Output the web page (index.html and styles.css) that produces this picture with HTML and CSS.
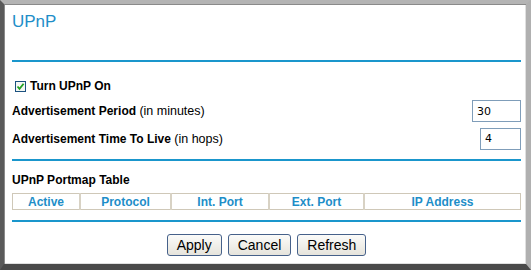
FILE: index.html
```html
<!DOCTYPE html>
<html lang="en">
<head>
    <meta charset="UTF-8">
    <meta name="viewport" content="width=device-width, initial-scale=1.0">
    <title>UPnP</title>
    <link rel="stylesheet" href="styles.css">
</head>
<body>
    <div class="frame">
        <div class="page">
            <h1 class="title">UPnP</h1>
            <div class="rule rule-top"></div>

            <div class="row row-check">
                <span class="check">
                    <svg width="11" height="11" viewBox="0 0 11 11">
                        <rect x="0.5" y="0.5" width="10" height="10" fill="#f4f8f4" stroke="#1c5180"/>
                        <path d="M2.5 5.5 L4.5 7.8 L8.6 2.8" fill="none" stroke="#21a121" stroke-width="1.8"/>
                    </svg>
                </span>
                <b>Turn UPnP On</b>
            </div>
            <div class="row row-field row-period">
                <span><b>Advertisement Period</b> <span class="note">(in minutes)</span></span>
                <input class="field field-wide" type="text" value="30">
            </div>
            <div class="row row-field row-ttl">
                <span><b>Advertisement Time To Live</b> <span class="note">(in hops)</span></span>
                <input class="field field-narrow" type="text" value="4">
            </div>
            <div class="rule rule-mid"></div>

            <div class="table-label"><b>UPnP Portmap Table</b></div>
            <table class="portmap">
                <tr>
                    <th class="c-active">Active</th>
                    <th class="c-proto">Protocol</th>
                    <th class="c-int">Int. Port</th>
                    <th class="c-ext">Ext. Port</th>
                    <th>IP Address</th>
                </tr>
            </table>
            <div class="rule rule-bottom"></div>

            <div class="buttons">
                <button class="btn">Apply</button>
                <button class="btn">Cancel</button>
                <button class="btn">Refresh</button>
            </div>
        </div>
    </div>
</body>
</html>
```

FILE: styles.css
```css
body {
    margin: 0;
    background: #d8d8d8;
    font-family: 'Liberation Sans', Arial, sans-serif;
    font-size: 12px;
    color: #000;
}
.frame {
    width: 531px;
    height: 270px;
    box-sizing: border-box;
    background: #fff;
    border-top: 4px solid #b4b4b4;
    border-left: 4px solid #5a5a5a;
    border-right: 5px solid #b0b0b0;
    border-bottom: 6px solid #4a4a4a;
    box-shadow: inset 1px 1px 0 #8a8a8a, inset -1px -1px 0 #e0e0e0;
}
.page {
    padding: 0 5px 0 8px;
}
.title {
    margin: 0;
    padding-top: 8px;
    height: 22px;
    font-size: 17px;
    font-weight: normal;
    color: #1e8ec8;
}
.rule {
    height: 2px;
    background: #1a96cc;
}
.rule-top {
    margin-top: 26px;
}
.row {
    display: flex;
    align-items: center;
}
.row-check {
    margin-top: 15px;
    height: 18px;
    padding-left: 3px;
    gap: 4px;
}
.check svg {
    display: block;
}
.row-field {
    justify-content: space-between;
}
.row-period {
    height: 32px;
}
.row-ttl {
    height: 23px;
}
.note {
    font-size: 12.5px;
}
.field {
    box-sizing: border-box;
    height: 22px;
    border: 1px solid #7f9db9;
    font-family: 'DejaVu Sans', sans-serif;
    font-size: 11px;
    padding: 0 4px;
    outline: none;
}
.field-wide {
    width: 49px;
}
.field-narrow {
    width: 41px;
}
.rule-mid {
    margin-top: 9px;
}
.table-label {
    margin-top: 12px;
    height: 15px;
}
.portmap {
    width: 100%;
    border-collapse: collapse;
    border: 1px solid #cfc8b8;
    margin-top: 5px;
}
.portmap th {
    height: 15px;
    padding: 0;
    border-left: 2px solid #d8d2c4;
    color: #1e8ec8;
    font-size: 12px;
    text-align: center;
}
.portmap th:first-child {
    border-left: none;
}
.c-active { width: 66px; }
.c-proto { width: 89px; }
.c-int { width: 96px; }
.c-ext { width: 93px; }
.rule-bottom {
    margin-top: 10px;
}
.buttons {
    display: flex;
    justify-content: center;
    gap: 6px;
    margin-top: 12px;
}
.btn {
    height: 22px;
    padding: 0 9px;
    font-family: 'Liberation Sans', Arial, sans-serif;
    font-size: 14px;
    color: #000;
    background: linear-gradient(#fbfbf9, #e6e4dc);
    border: 1px solid #46618a;
    border-radius: 3px;
}
```
